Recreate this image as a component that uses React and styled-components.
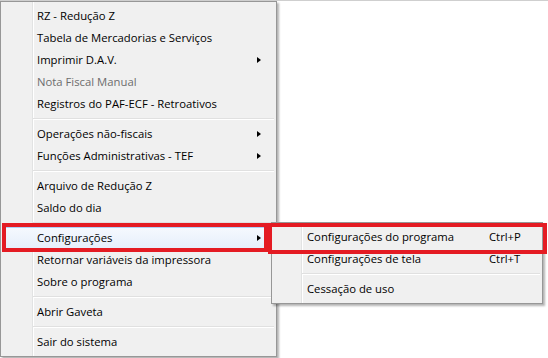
import React from "react";
import styled, { createGlobalStyle } from "styled-components";

const Global = createGlobalStyle`
  html, body { margin: 0; padding: 0; background: #ffffff; }
  body {
    font-family: "Open Sans", "Noto Sans", sans-serif;
    font-size: 11.3px;
    color: #000;
    border-top: 1px solid #cfcfcf;
  }
  * { box-sizing: border-box; }
`;

const Stage = styled.div`
  position: relative;
  width: 548px;
  height: 357px;
  overflow: hidden;
`;

const Menu = styled.div`
  position: ${(p) => (p.$sub ? "absolute" : "relative")};
  left: ${(p) => (p.$sub ? "271px" : "0")};
  top: ${(p) => (p.$sub ? "221px" : "0")};
  width: ${(p) => p.$width}px;
  padding: 3px 2px;
  border: 1px solid #979797;
  background: linear-gradient(
    to right,
    #f0f0f0 0 ${(p) => p.$gutter}px,
    #e2e3e3 ${(p) => p.$gutter}px ${(p) => p.$gutter + 1}px,
    #ffffff ${(p) => p.$gutter + 1}px ${(p) => p.$gutter + 2}px,
    #f0f0f0 ${(p) => p.$gutter + 2}px
  );
  box-shadow: 2px 2px 2px rgba(0, 0, 0, 0.3);
  display: flex;
  flex-direction: column;
`;

const Item = styled.div`
  height: 22px;
  display: flex;
  align-items: center;
  padding-left: ${(p) => p.$pad}px;
  padding-right: 8px;
  padding-bottom: 1px;
  color: ${(p) => (p.$disabled ? "#6d6d6d" : "#000")};
  border: 1px solid ${(p) => (p.$active ? "#aecff7" : "transparent")};
  border-radius: 3px;
  background: ${(p) =>
    p.$active ? "linear-gradient(#f5f9fe, #e6effb)" : "transparent"};
  white-space: nowrap;
`;

const Label = styled.span`
  flex: 1;
`;

const Shortcut = styled.span`
  width: 40px;
  margin-right: 2px;
`;

const Arrow = styled.span`
  width: 0;
  height: 0;
  border-top: 3.5px solid transparent;
  border-bottom: 3.5px solid transparent;
  border-left: 4px solid #000;
  margin-right: 4px;
`;

const Separator = styled.div`
  height: 8px;
  margin-left: ${(p) => p.$indent}px;
  display: flex;
  flex-direction: column;
  justify-content: center;
  &::before {
    content: "";
    display: block;
    height: 1px;
    background: #e0e0e0;
  }
  &::after {
    content: "";
    display: block;
    height: 1px;
    background: #ffffff;
  }
`;

const Callout = styled.div`
  position: absolute;
  left: ${(p) => p.$x}px;
  top: ${(p) => p.$y}px;
  width: ${(p) => p.$w}px;
  height: ${(p) => p.$h}px;
  border: 4px solid #e41b23;
  pointer-events: none;
`;

const mainItems = [
  { label: "RZ - Redução Z" },
  { label: "Tabela de Mercadorias e Serviços" },
  { label: "Imprimir D.A.V.", sub: true },
  { label: "Nota Fiscal Manual", disabled: true },
  { label: "Registros do PAF-ECF - Retroativos" },
  { sep: true },
  { label: "Operações não-fiscais", sub: true },
  { label: "Funções Administrativas - TEF", sub: true },
  { sep: true },
  { label: "Arquivo de Redução Z" },
  { label: "Saldo do dia" },
  { sep: true },
  { label: "Configurações", sub: true, active: true },
  { label: "Retornar variáveis da impressora" },
  { label: "Sobre o programa" },
  { sep: true },
  { label: "Abrir Gaveta" },
  { sep: true },
  { label: "Sair do sistema" },
];

const subItems = [
  { label: "Configurações do programa", shortcut: "Ctrl+P" },
  { label: "Configurações de tela", shortcut: "Ctrl+T" },
  { sep: true },
  { label: "Cessação de uso" },
];

function MenuList({ items, pad, indent }) {
  return items.map((it, i) =>
    it.sep ? (
      <Separator key={i} $indent={indent} />
    ) : (
      <Item key={i} $pad={pad} $disabled={it.disabled} $active={it.active}>
        <Label>{it.label}</Label>
        {it.shortcut && <Shortcut>{it.shortcut}</Shortcut>}
        {it.sub && <Arrow />}
      </Item>
    )
  );
}

export default function App() {
  return (
    <>
      <Global />
      <Stage>
        <Menu $width={277} $gutter={31}>
          <MenuList items={mainItems} pad={33} indent={30} />
        </Menu>
        <Menu $sub $width={272} $gutter={29}>
          <MenuList items={subItems} pad={32} indent={28} />
        </Menu>
        <Callout $x={2} $y={222} $w={266} $h={29} />
        <Callout $x={268} $y={222} $w={279} $h={31} />
      </Stage>
    </>
  );
}
